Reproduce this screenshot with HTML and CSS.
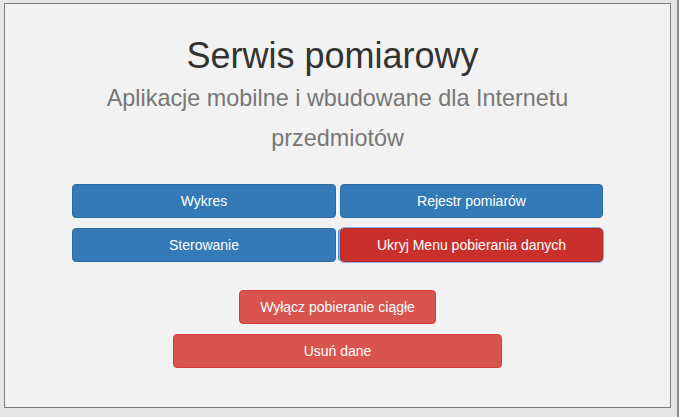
FILE: index.html
```html
<!DOCTYPE html>
<html lang="pl">
<head>
<meta charset="utf-8">
<title>Serwis pomiarowy</title>
<link rel="stylesheet" href="styles.css">
</head>
<body>
<div class="frame">
  <main class="panel">
    <h1 class="title">Serwis pomiarowy</h1>
    <p class="subtitle">Aplikacje mobilne i wbudowane dla Internetu<br>przedmiotów</p>
    <div class="grid">
      <button class="btn btn-primary">Wykres</button>
      <button class="btn btn-primary">Rejestr pomiarów</button>
      <button class="btn btn-primary">Sterowanie</button>
      <button class="btn btn-danger-active focused">Ukryj Menu pobierania danych</button>
    </div>
    <div class="stack">
      <button class="btn btn-danger w-narrow">Wyłącz pobieranie ciągłe</button>
      <button class="btn btn-danger w-wide">Usuń dane</button>
    </div>
  </main>
</div>
</body>
</html>
```

FILE: styles.css
```css
html, body {
  margin: 0;
  padding: 0;
}
body {
  background: #e6e6e6;
  font-family: "Liberation Sans", Arial, sans-serif;
  width: 679px;
  height: 417px;
  overflow: hidden;
}
.frame {
  box-sizing: border-box;
  width: 679px;
  height: 417px;
  padding: 3px 0 0 4px;
  border-right: 2px solid #8c8c8c;
}
.panel {
  box-sizing: border-box;
  width: 667px;
  height: 405px;
  background: #f2f2f2;
  border: 1px solid #7d7d7d;
  display: flex;
  flex-direction: column;
  align-items: center;
  padding-top: 32px;
}
.title {
  margin: 0 10px 0 0;
  font-size: 36px;
  font-weight: 400;
  line-height: 40px;
  color: #333;
}
.subtitle {
  margin: 2px 0 0;
  font-size: 23.4px;
  line-height: 40px;
  color: #777;
  text-align: center;
}
.grid {
  margin-top: 26px;
  display: grid;
  grid-template-columns: 264px 263px;
  column-gap: 4px;
  row-gap: 10px;
}
.stack {
  margin-top: 28px;
  display: flex;
  flex-direction: column;
  align-items: center;
  gap: 10px;
}
.btn {
  box-sizing: border-box;
  height: 34px;
  padding: 6px 12px;
  font-family: "Liberation Sans", Arial, sans-serif;
  font-size: 14px;
  line-height: 20px;
  color: #fff;
  border: 1px solid transparent;
  border-radius: 4px;
  text-align: center;
}
.btn-primary {
  background: #337ab7;
  border-color: #2e6da4;
}
.btn-danger {
  background: #d9534f;
  border-color: #d43f3a;
}
.btn-danger-active {
  background: #c9302c;
  border-color: #ac2925;
}
.focused {
  outline: 1px solid #8bb2f2;
  outline-offset: 0;
  box-shadow: -3px 0 0 -1px #3d8ef3;
}
.w-narrow {
  width: 197px;
}
.w-wide {
  width: 329px;
}
```
